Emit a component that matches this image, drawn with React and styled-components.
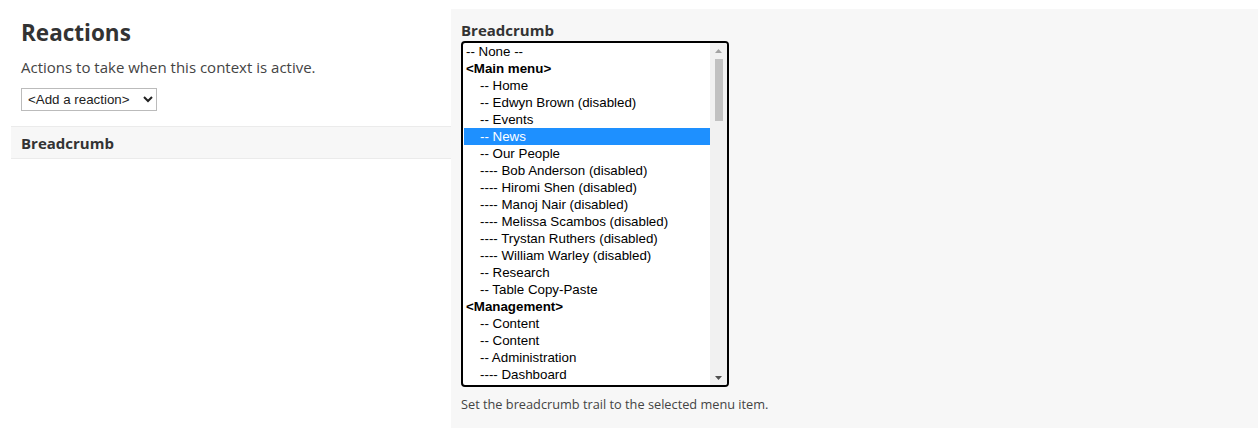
import styled, { createGlobalStyle } from 'styled-components';

const GlobalStyle = createGlobalStyle`
  html, body {
    margin: 0;
    padding: 0;
    background: #fff;
  }
  body {
    font-family: "Open Sans", sans-serif;
    color: #333;
  }
`

const Page = styled.div`
  display: flex;
  width: 1258px;
  height: 428px;
  overflow: hidden;
`

const LeftCol = styled.section`
  width: 440px;
  padding-left: 11px;
  flex-shrink: 0;
`

const Intro = styled.div`
  padding: 16px 10px 0 10px;
`

const Title = styled.h2`
  margin: 0;
  font-size: 22.5px;
  line-height: 34px;
  font-weight: 700;
  color: #333;
`

const Desc = styled.p`
  margin: 7px 0 0;
  font-size: 15px;
  line-height: 20px;
  color: #444;
`

const AddSelect = styled.select`
  margin-top: 11px;
  height: 23px;
  width: 136px;
  font-family: "Liberation Sans", Arial, sans-serif;
  font-size: 13.33px;
  color: #222;
  background: #fff;
  border: 1px solid #bbb;
  border-radius: 0;
  padding: 0 2px;
`

const SectionRow = styled.div`
  margin-top: 15px;
  height: 31px;
  display: flex;
  align-items: center;
  padding-left: 10px;
  background: #f7f7f7;
  border-top: 1px solid #ebebeb;
  border-bottom: 1px solid #ebebeb;
  font-size: 15px;
  font-weight: 700;
  color: #333;
`

const RightPanel = styled.section`
  flex: 1;
  margin-top: 9px;
  background: #f7f7f7;
  padding: 10px 10px 0 10px;
`

const Label = styled.div`
  font-size: 15px;
  line-height: 22px;
  font-weight: 700;
  color: #333;
`

const ListBox = styled.div`
  width: 264px;
  height: 342px;
  border: 2px solid #000;
  border-radius: 4px;
  background: #fff;
  display: flex;
  overflow: hidden;
`

const Options = styled.div`
  flex: 1;
  font-family: "Liberation Sans", Arial, sans-serif;
  font-size: 13.33px;
  color: #000;
`

const Option = styled.div`
  height: 17px;
  line-height: 17px;
  white-space: nowrap;
  padding-left: ${p => (p.$group ? 2 : p.$nested ? 16 : 2)}px;
  margin-left: 1px;
  font-weight: ${p => (p.$group ? 700 : 400)};
  background: ${p => (p.$selected ? '#1e90ff' : 'transparent')};
  color: ${p => (p.$selected ? '#fff' : '#000')};
`

const Scrollbar = styled.div`
  width: 17px;
  background: #f1f1f1;
  display: flex;
  flex-direction: column;
  align-items: center;
`

const Arrow = styled.div`
  height: 15px;
  display: flex;
  align-items: center;
  justify-content: center;
`

const Thumb = styled.div`
  width: 8px;
  height: 62px;
  background: #c1c1c1;
  margin-top: 1px;
`

const Spacer = styled.div`
  flex: 1;
`

const Help = styled.div`
  margin-top: 8px;
  font-size: 12.75px;
  color: #444;
`

const items = [
  { t: '-- None --' },
  { t: '<Main menu>', group: true },
  { t: '-- Home', n: true },
  { t: '-- Edwyn Brown (disabled)', n: true },
  { t: '-- Events', n: true },
  { t: '-- News', n: true, sel: true },
  { t: '-- Our People', n: true },
  { t: '---- Bob Anderson (disabled)', n: true },
  { t: '---- Hiromi Shen (disabled)', n: true },
  { t: '---- Manoj Nair (disabled)', n: true },
  { t: '---- Melissa Scambos (disabled)', n: true },
  { t: '---- Trystan Ruthers (disabled)', n: true },
  { t: '---- William Warley (disabled)', n: true },
  { t: '-- Research', n: true },
  { t: '-- Table Copy-Paste', n: true },
  { t: '<Management>', group: true },
  { t: '-- Content', n: true },
  { t: '-- Content', n: true },
  { t: '-- Administration', n: true },
  { t: '---- Dashboard', n: true },
]

export default function App () {
  return (
    <>
      <GlobalStyle />
      <Page>
        <LeftCol>
          <Intro>
            <Title>Reactions</Title>
            <Desc>Actions to take when this context is active.</Desc>
            <AddSelect defaultValue=''>
              <option value=''>&lt;Add a reaction&gt;</option>
            </AddSelect>
          </Intro>
          <SectionRow>Breadcrumb</SectionRow>
        </LeftCol>

        <RightPanel>
          <Label>Breadcrumb</Label>
          <ListBox>
            <Options>
              {items.map((it, i) => (
                <Option key={i} $group={it.group} $nested={it.n} $selected={it.sel}>
                  {it.t}
                </Option>
              ))}
            </Options>
            <Scrollbar>
              <Arrow>
                <svg width="7" height="4" viewBox="0 0 7 4"><path d="M0 4 L3.5 0 L7 4 Z" fill="#a3a3a3" /></svg>
              </Arrow>
              <Thumb />
              <Spacer />
              <Arrow>
                <svg width="7" height="4" viewBox="0 0 7 4"><path d="M0 0 L3.5 4 L7 0 Z" fill="#505050" /></svg>
              </Arrow>
            </Scrollbar>
          </ListBox>
          <Help>Set the breadcrumb trail to the selected menu item.</Help>
        </RightPanel>
      </Page>
    </>
  )
}
